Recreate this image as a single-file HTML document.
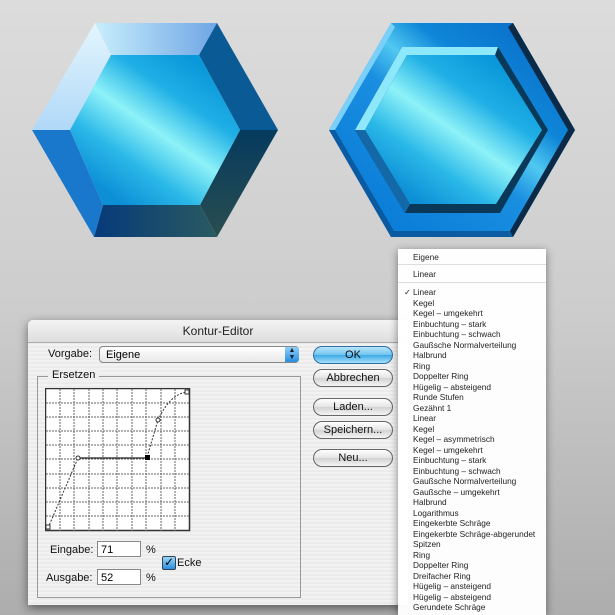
<!DOCTYPE html>
<html><head><style>
body{margin:0;width:615px;height:615px;overflow:hidden;position:relative;background:linear-gradient(#dcdcdc,#cdcdcd 50%,#adadad);font-family:"Liberation Sans","DejaVu Sans",sans-serif;}
.abs{position:absolute}
.dlg{left:28px;top:320px;width:380px;height:285px;background:repeating-linear-gradient(#f2f2f2 0,#f2f2f2 2px,#ebebeb 2px,#ebebeb 4px);box-shadow:0 3px 10px rgba(0,0,0,.5);border-radius:5px 5px 0 0}
.title{left:0;top:0;width:380px;height:22px;background:linear-gradient(#f4f4f4,#dedede);border-bottom:1px solid #aaa;border-radius:5px 5px 0 0;text-align:center;font-size:12px;line-height:22px;color:#222}
.btn{width:78px;height:16px;border:1px solid #666;border-radius:9px;background:linear-gradient(#fff,#e4e4e4 50%,#d2d2d2 51%,#f4f4f4);font-size:11px;text-align:center;line-height:17px;color:#111}
.ok{background:linear-gradient(#b8e6fb,#6fc3ef 50%,#3ea8e6 51%,#a3e2fb);border-color:#346ea0}
.lbl{font-size:11px;color:#111}
.inp{background:#fff;border:1px solid #888;width:44px;height:16px;font-size:11px;line-height:16px;padding-left:3px;box-sizing:border-box}
.menu{left:398px;top:249px;width:148px;height:366px;background:rgba(255,255,255,.97);box-shadow:0 2px 8px rgba(0,0,0,.45);font-size:8.3px;color:#222}
.menu div{position:absolute;left:15px;white-space:nowrap}
.sep{height:1px;background:#ddd;left:0!important;width:148px}
</style></head><body>
<svg class="abs" style="left:0;top:0" width="615" height="250">
<defs>
<linearGradient id="f1" gradientUnits="userSpaceOnUse" x1="110" y1="195" x2="200" y2="65"><stop offset="0" stop-color="#0d8fd6"/><stop offset=".25" stop-color="#2ab8e8"/><stop offset=".5" stop-color="#8ef2f8"/><stop offset=".75" stop-color="#20b0e6"/><stop offset="1" stop-color="#0a98da"/></linearGradient>
<linearGradient id="f2" gradientUnits="userSpaceOnUse" x1="408" y1="195" x2="498" y2="65"><stop offset="0" stop-color="#0d8fd6"/><stop offset=".25" stop-color="#2ab8e8"/><stop offset=".5" stop-color="#8ef2f8"/><stop offset=".75" stop-color="#20b0e6"/><stop offset="1" stop-color="#0a98da"/></linearGradient>
<linearGradient id="r2" gradientUnits="userSpaceOnUse" x1="380" y1="220" x2="530" y2="40"><stop offset="0" stop-color="#0a7ed8"/><stop offset=".45" stop-color="#1a8ee0"/><stop offset=".6" stop-color="#50c8f0"/><stop offset=".75" stop-color="#0f86d8"/><stop offset="1" stop-color="#0a72cc"/></linearGradient>
<linearGradient id="tb" x1="0" y1="0" x2="1" y2="0"><stop offset="0" stop-color="#c8eefc"/><stop offset="1" stop-color="#6fa6e4"/></linearGradient>
<linearGradient id="bb" x1="0" y1="0" x2="1" y2="0"><stop offset="0" stop-color="#063a7a"/><stop offset="1" stop-color="#2a5a60"/></linearGradient>
<linearGradient id="rb" x1="0" y1="0" x2="0" y2="1"><stop offset="0" stop-color="#053a5e"/><stop offset="1" stop-color="#2a4e50"/></linearGradient>
<linearGradient id="lt" x1="0" y1="0" x2="0" y2="1"><stop offset="0" stop-color="#e4f6fe"/><stop offset="1" stop-color="#b0d8f8"/></linearGradient>
</defs>
<!-- hex 1 -->
<polygon points="95,23 217,23 199,55 111,55" fill="url(#tb)"/>
<polygon points="32,130 95,23 111,55 70,130" fill="url(#lt)"/>
<polygon points="217,23 278,130 240,130 199,55" fill="#0a5a96"/>
<polygon points="278,130 217,237 200,205 240,130" fill="url(#rb)"/>
<polygon points="217,237 94,237 103,205 200,205" fill="url(#bb)"/>
<polygon points="94,237 32,130 70,130 103,205" fill="#1a78cc"/>
<polygon points="111,55 199,55 240,130 200,205 103,205 70,130" fill="url(#f1)"/>
<!-- hex 2 -->
<polygon points="391,23 513,23 575,130 513,237 391,237 329,130" fill="url(#r2)"/>
<polygon points="513,23 575,130 513,237 510,231 568,130 508,27" fill="#0a2a48"/>
<polygon points="391,23 329,130 335,130 395,27" fill="#7ad0f8"/>
<polygon points="329,130 391,237 513,237 510,231 394,231 335,130" fill="#0a4a8a" opacity=".7"/>
<polygon points="402,47 498,47 548,130 500,213 405,213 355,130" fill="#0a3858"/>
<polygon points="402,47 498,47 495,55 407,55 365,130 355,130" fill="#8ee8fc"/>
<polygon points="355,130 365,130 410,204 405,213" fill="#1468a8"/>
<polygon points="407,55 495,55 542,130 496,204 410,204 365,130" fill="url(#f2)"/>
</svg>

<div class="abs dlg">
 <div class="abs title">Kontur-Editor</div>
 <div class="abs lbl" style="left:20px;top:28px">Vorgabe:</div>
 <div class="abs" style="left:71px;top:26px;width:200px;height:17px;border:1px solid #888;border-radius:4px;background:linear-gradient(#fff,#e8e8e8);font-size:11px;line-height:17px;padding-left:6px;box-sizing:border-box">Eigene</div>
 <div class="abs" style="left:257px;top:27px;width:14px;height:15px;background:linear-gradient(#8fd0f6,#2a8ee0);border-radius:0 3px 3px 0;color:#123;font-size:7px;line-height:7px;text-align:center">▲<br>▼</div>
 <div class="abs btn ok" style="left:285px;top:26px">OK</div>
 <div class="abs btn" style="left:285px;top:49px">Abbrechen</div>
 <div class="abs btn" style="left:285px;top:78px">Laden...</div>
 <div class="abs btn" style="left:285px;top:101px">Speichern...</div>
 <div class="abs btn" style="left:285px;top:129px">Neu...</div>
 <div class="abs" style="left:9px;top:56px;width:262px;height:220px;border:1px solid #999"></div>
 <div class="abs lbl" style="left:20px;top:49px;background:#efefef;padding:0 4px">Ersetzen</div>
 <svg class="abs" style="left:17px;top:68px" width="146" height="144">
  <rect x="0.5" y="0.5" width="144" height="142" fill="#fff" stroke="#333" stroke-width="1.5"/>
  <g stroke="#666" stroke-dasharray="2,1" stroke-width="1">
   <path d="M15 1V143M29 1V143M44 1V143M58 1V143M72 1V143M87 1V143M101 1V143M116 1V143M130 1V143"/>
   <path d="M1 15H144M1 29H144M1 43H144M1 57H144M1 71H144M1 86H144M1 100H144M1 114H144M1 128H144"/>
  </g>
  <path d="M3 140L33 70M102 69L113 32Q125 6 142 4" fill="none" stroke="#333" stroke-dasharray="2,1.5"/>
  <path d="M33 70H102" stroke="#222" stroke-width="1.3"/>
  <circle cx="33" cy="70" r="2" fill="#fff" stroke="#333"/>
  <circle cx="113" cy="32" r="2" fill="#fff" stroke="#333"/>
  <rect x="100" y="67" width="5" height="5" fill="#000"/>
  <rect x="1" y="137" width="4" height="4" fill="#fff" stroke="#333"/>
  <rect x="140" y="2" width="4" height="4" fill="#fff" stroke="#333"/>
 </svg>
 <div class="abs lbl" style="left:22px;top:224px">Eingabe:</div>
 <div class="abs inp" style="left:69px;top:221px">71</div>
 <div class="abs lbl" style="left:118px;top:224px">%</div>
 <div class="abs lbl" style="left:18px;top:252px">Ausgabe:</div>
 <div class="abs inp" style="left:69px;top:249px">52</div>
 <div class="abs lbl" style="left:118px;top:252px">%</div>
 <div class="abs" style="left:134px;top:236px;width:12px;height:12px;background:linear-gradient(#9ad6f8,#2a8ee0);border:1px solid #345;border-radius:2px;font-size:12px;line-height:11px;text-align:center;color:#000">✓</div>
 <div class="abs lbl" style="left:149px;top:237px">Ecke</div>
</div>

<div class="abs menu">
<div style="top:3px">Eigene</div>
<div class="sep" style="top:15px"></div>
<div style="top:20px">Linear</div>
<div class="sep" style="top:33px"></div>
<div style="top:38px;left:6px">✓</div>
<div style="top:38px">Linear</div>
<div style="top:48.5px">Kegel</div>
<div style="top:59px">Kegel – umgekehrt</div>
<div style="top:69.5px">Einbuchtung – stark</div>
<div style="top:80px">Einbuchtung – schwach</div>
<div style="top:90.5px">Gaußsche Normalverteilung</div>
<div style="top:101px">Halbrund</div>
<div style="top:111.5px">Ring</div>
<div style="top:122px">Doppelter Ring</div>
<div style="top:132.5px">Hügelig – absteigend</div>
<div style="top:143px">Runde Stufen</div>
<div style="top:153.5px">Gezähnt 1</div>
<div style="top:164px">Linear</div>
<div style="top:174.5px">Kegel</div>
<div style="top:185px">Kegel – asymmetrisch</div>
<div style="top:195.5px">Kegel – umgekehrt</div>
<div style="top:206px">Einbuchtung – stark</div>
<div style="top:216.5px">Einbuchtung – schwach</div>
<div style="top:227px">Gaußsche Normalverteilung</div>
<div style="top:237.5px">Gaußsche – umgekehrt</div>
<div style="top:248px">Halbrund</div>
<div style="top:258.5px">Logarithmus</div>
<div style="top:269px">Eingekerbte Schräge</div>
<div style="top:279.5px">Eingekerbte Schräge-abgerundet</div>
<div style="top:290px">Spitzen</div>
<div style="top:300.5px">Ring</div>
<div style="top:311px">Doppelter Ring</div>
<div style="top:321.5px">Dreifacher Ring</div>
<div style="top:332px">Hügelig – ansteigend</div>
<div style="top:342.5px">Hügelig – absteigend</div>
<div style="top:353px">Gerundete Schräge</div>
</div>
</body></html>
